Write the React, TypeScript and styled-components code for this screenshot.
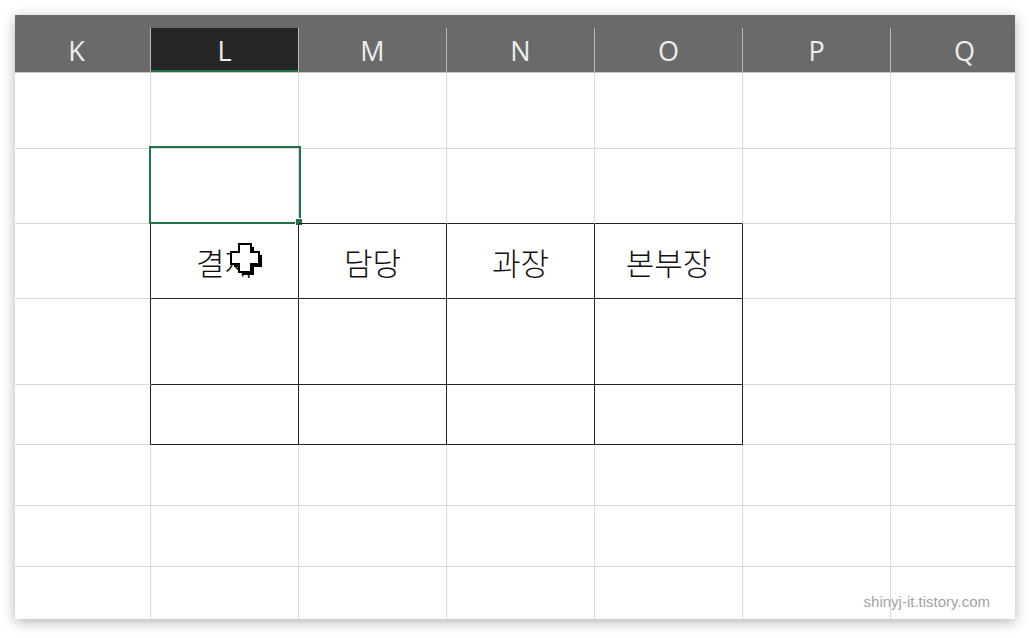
import { createGlobalStyle, styled } from 'styled-components';

const GlobalStyle = createGlobalStyle`
  html, body {
    margin: 0;
    background: #ffffff;
  }
`;

const columns = ['K', 'L', 'M', 'N', 'O', 'P', 'Q'];
const rowHeights = [76, 75, 75, 86, 60, 61, 61, 61];
const tableHeaders = ['결재', '담당', '과장', '본부장'];

// table occupies columns L..O (1..4) and rows 3..5 (index 2..4)
const inTable = (r: number, c: number) => r >= 2 && r <= 4 && c >= 1 && c <= 4;

export default function App() {
  return (
    <>
      <GlobalStyle />
      <Window>
        <Header>
          {columns.map((c) => (
            <ColHead key={c} $active={c === 'L'}>
              {c}
            </ColHead>
          ))}
        </Header>
        <Sheet>
          {rowHeights.map((h, r) => (
            <Row key={r} style={{ height: h }}>
              {columns.map((col, c) => {
                const rightBlack = inTable(r, c) || inTable(r, c + 1);
                const bottomBlack = inTable(r, c) || inTable(r + 1, c);
                const label = r === 2 && c >= 1 && c <= 4 ? tableHeaders[c - 1] : '';
                return (
                  <Cell
                    key={col}
                    $right={rightBlack ? '#222222' : '#dadada'}
                    $bottom={bottomBlack ? '#222222' : '#dadada'}
                  >
                    {label}
                    {r === 1 && c === 1 && (
                      <Selection>
                        <Handle />
                      </Selection>
                    )}
                    {r === 2 && c === 1 && <CrossCursor />}
                  </Cell>
                );
              })}
            </Row>
          ))}
        </Sheet>
        <Watermark>shinyj-it.tistory.com</Watermark>
      </Window>
    </>
  );
}

function CrossCursor() {
  const plus = 'M9 1h12v8h8v12h-8v8h-12v-8h-8v-12h8z';
  return (
    <Cursor width="34" height="34" viewBox="0 0 34 34">
      <path d={plus} transform="translate(3 3)" fill="#000" />
      <path d={plus} fill="#fff" stroke="#000" strokeWidth="2" />
    </Cursor>
  );
}

const Window = styled.div`
  position: relative;
  margin: 15px;
  width: 1000px;
  height: 604px;
  overflow: hidden;
  background: #ffffff;
  box-shadow: 0 3px 12px rgba(0, 0, 0, 0.3);
`;

const Header = styled.div`
  display: grid;
  grid-template-columns: repeat(7, 148px);
  margin-left: -12px;
  padding-top: 13px;
  background: #6a6a6a;
  border-bottom: 1px solid #c4c4c4;
`;

const ColHead = styled.div<{ $active: boolean }>`
  height: 44px;
  box-sizing: border-box;
  display: flex;
  align-items: center;
  justify-content: center;
  border-right: 1px solid #b8b8b8;
  background: ${(p) => (p.$active ? '#262626' : 'transparent')};
  box-shadow: ${(p) => (p.$active ? 'inset 0 -2px 0 #217346' : 'none')};
  color: #ededed;
  font-family: 'Open Sans', sans-serif;
  font-weight: 400;
  font-size: 27px;
`;

const Sheet = styled.div`
  display: flex;
  flex-direction: column;
  margin-left: -12px;
`;

const Row = styled.div`
  display: grid;
  grid-template-columns: repeat(7, 148px);
  flex-shrink: 0;
`;

const Cell = styled.div<{ $right: string; $bottom: string }>`
  position: relative;
  box-sizing: border-box;
  display: flex;
  align-items: center;
  justify-content: center;
  border-right: 1px solid ${(p) => p.$right};
  border-bottom: 1px solid ${(p) => p.$bottom};
  color: #111111;
  font-family: 'Noto Sans CJK KR', sans-serif;
  font-weight: 300;
  font-size: 31px;
  letter-spacing: 0;
`;

const Selection = styled.div`
  position: absolute;
  left: -2px;
  top: -3px;
  width: 152px;
  height: 78px;
  box-sizing: border-box;
  border: 2px solid #217346;
`;

const Handle = styled.div`
  position: absolute;
  right: -4px;
  bottom: -4px;
  width: 6px;
  height: 6px;
  background: #217346;
  border: 1px solid #ffffff;
`;

const Cursor = styled.svg`
  position: absolute;
  left: 79px;
  top: 19px;
`;

const Watermark = styled.div`
  position: absolute;
  right: 25px;
  bottom: 9px;
  color: #a3a3a3;
  font-family: 'Liberation Sans', Arial, sans-serif;
  font-size: 15px;
`;
